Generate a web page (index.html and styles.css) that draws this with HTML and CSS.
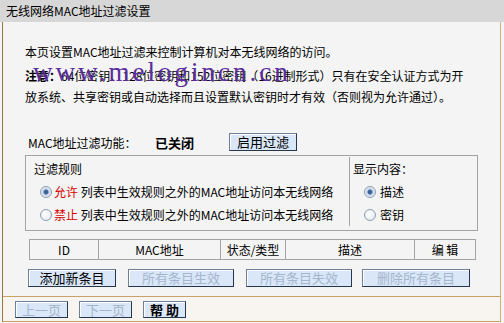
FILE: index.html
```html
<!DOCTYPE html>
<html lang="zh-CN">
  <head>
    <meta charset="utf-8">
    <title>无线网络MAC地址过滤设置</title>
    <link rel="stylesheet" href="styles.css">
  </head>
  <body>
    <div class="page">
      <div class="title-bar">无线网络MAC地址过滤设置</div>

      <div class="frame">
        <div class="content">
          <p class="intro">本页设置MAC地址过滤来控制计算机对本无线网络的访问。</p>
          <p class="note"><b>注意：</b>64位密钥、128位密钥和152位密钥（16进制形式）只有在安全认证方式为开放系统、共享密钥或自动选择而且设置默认密钥时才有效（否则视为允许通过）。</p>

          <div class="status-row">
            <span class="status-label">MAC地址过滤功能：</span>
            <b class="status-value">已关闭</b>
            <button class="btn">启用过滤</button>
          </div>

          <div class="rules">
            <div class="rules-main">
              <div class="rules-line">过滤规则</div>
              <label class="rules-line radio-line">
                <input type="radio" name="rule" checked>
                <span class="red">允许</span>&nbsp;列表中生效规则之外的MAC地址访问本无线网络
              </label>
              <label class="rules-line radio-line">
                <input type="radio" name="rule">
                <span class="red">禁止</span>&nbsp;列表中生效规则之外的MAC地址访问本无线网络
              </label>
            </div>
            <div class="rules-side">
              <div class="rules-line">显示内容：</div>
              <label class="rules-line radio-line side-radio">
                <input type="radio" name="show" checked>描述
              </label>
              <label class="rules-line radio-line side-radio">
                <input type="radio" name="show">密钥
              </label>
            </div>
          </div>

          <table class="entries">
            <tr>
              <th class="col-id">ID</th>
              <th class="col-mac">MAC地址</th>
              <th class="col-state">状态/类型</th>
              <th class="col-desc">描述</th>
              <th class="col-edit">编 辑</th>
            </tr>
          </table>

          <div class="actions">
            <button class="btn btn-add">添加新条目</button>
            <button class="btn btn-wide" disabled>所有条目生效</button>
            <button class="btn btn-wide" disabled>所有条目失效</button>
            <button class="btn btn-wide btn-del" disabled>删除所有条目</button>
          </div>
        </div>

        <div class="footer">
          <button class="btn btn-page" disabled>上一页</button>
          <button class="btn btn-page" disabled>下一页</button>
          <button class="btn btn-help">帮 助</button>
        </div>
      </div>

      <div class="watermark">www.melogincn.cn</div>
    </div>
  </body>
</html>
```

FILE: styles.css
```css
body {
  margin: 0;
  background: #f4f4f4;
  font-family: "Noto Sans CJK SC", sans-serif;
  font-size: 12px;
  color: #000;
}
.page {
  position: relative;
  width: 504px;
  height: 323px;
  overflow: hidden;
}
.title-bar {
  height: 22px;
  line-height: 22px;
  padding-left: 6px;
  background: #d7d7d7;
  font-size: 12px;
}
.frame {
  height: 299px;
  margin-left: 2px;
  width: 497px;
  border-left: 1px solid #9c7440;
  border-right: 1px solid #d2b07c;
  border-bottom: 1px solid #c9a26a;
  display: flex;
  flex-direction: column;
}
.content {
  flex: 1;
  padding: 20px 0 0 22px;
  background: #f4f4f4;
}
.content p {
  margin: 0;
}
.intro {
  line-height: 20px;
}
.note {
  margin-top: 3px !important;
  line-height: 21px;
  width: 450px;
}
.note b {
  font-weight: bold;
}

/* 过滤功能状态行 */
.status-row {
  display: flex;
  align-items: center;
  height: 18px;
  margin-top: 26px;
  padding-left: 3px;
}
.status-label {
  width: 127px;
}
.status-value {
  width: 74px;
  font-size: 13px;
}

.btn {
  font-family: "Noto Sans CJK SC", sans-serif;
  font-size: 12px;
  height: 18px;
  padding: 0;
  line-height: 16px;
  white-space: nowrap;
  background: #d9e7f8;
  color: #000;
  border: 1px solid #25364c;
  border-top-color: #6f7f95;
  border-left-color: #6f7f95;
  box-shadow: inset 1px 1px 0 #fff;
  border-radius: 0;
}
.status-row .btn {
  width: 68px;
  font-size: 13px;
}
.btn:disabled {
  color: #a5b6cc;
}

/* 过滤规则框 */
.rules {
  display: flex;
  margin-top: 4px;
  width: 451px;
  border: 1px solid #a3a3a3;
  padding: 1px 0 4px;
}
.rules-main {
  width: 315px;
  padding-left: 8px;
  border-right: 1px solid #a3a3a3;
}
.rules-side {
  flex: 1;
  padding-left: 3px;
}
.rules-line {
  display: flex;
  align-items: center;
  height: 23px;
}
.radio-line input {
  appearance: none;
  width: 12px;
  height: 12px;
  margin: 0 2px 0 6px;
  border-radius: 50%;
  border: 1px solid #8d9db3;
  background: radial-gradient(circle at 40% 40%, #ffffff, #dfe3ea);
}
.radio-line input:checked {
  background: radial-gradient(circle, #2d4f86 0, #4b70a8 2px, #c8d6ea 3px, #f4f6f9 6px);
}
.side-radio input {
  margin-left: 11px;
  margin-right: 4px;
}
.red {
  color: #d40000;
}

/* 条目表头 */
.entries {
  margin-top: 8px;
  margin-left: 4px;
  border-collapse: collapse;
  width: 447px;
}
.entries th {
  height: 19px;
  padding: 0;
  font-weight: normal;
  border: 1px solid #a3a3a3;
  background: #f4f4f4;
}
.col-id { width: 68px; }
.col-mac { width: 121px; }
.col-state { width: 64px; }
.col-desc { width: 128px; }

.actions {
  display: flex;
  gap: 12px;
  margin-top: 9px;
  padding-left: 3px;
}
.btn-add {
  width: 88px;
  font-size: 13px;
}
.btn-wide {
  width: 106px;
  font-size: 13px;
}
.btn-del {
  width: 108px;
  margin-left: -2px;
}

/* 底部翻页 */
.footer {
  height: 24px;
  border-top: 1px solid #c9a26a;
  background: #f8f5f0;
  display: flex;
  align-items: center;
  gap: 11px;
  padding-left: 12px;
}
.btn-page {
  width: 53px;
  height: 17px;
  font-size: 13px;
}
.btn-help {
  width: 43px;
  height: 17px;
  font-weight: bold;
  font-size: 13px;
}

.watermark {
  position: absolute;
  left: 33px;
  top: 57px;
  font-family: "Liberation Serif", serif;
  font-size: 27px;
  line-height: 30px;
  letter-spacing: 3px;
  color: #5b2d9c;
  pointer-events: none;
}
```
